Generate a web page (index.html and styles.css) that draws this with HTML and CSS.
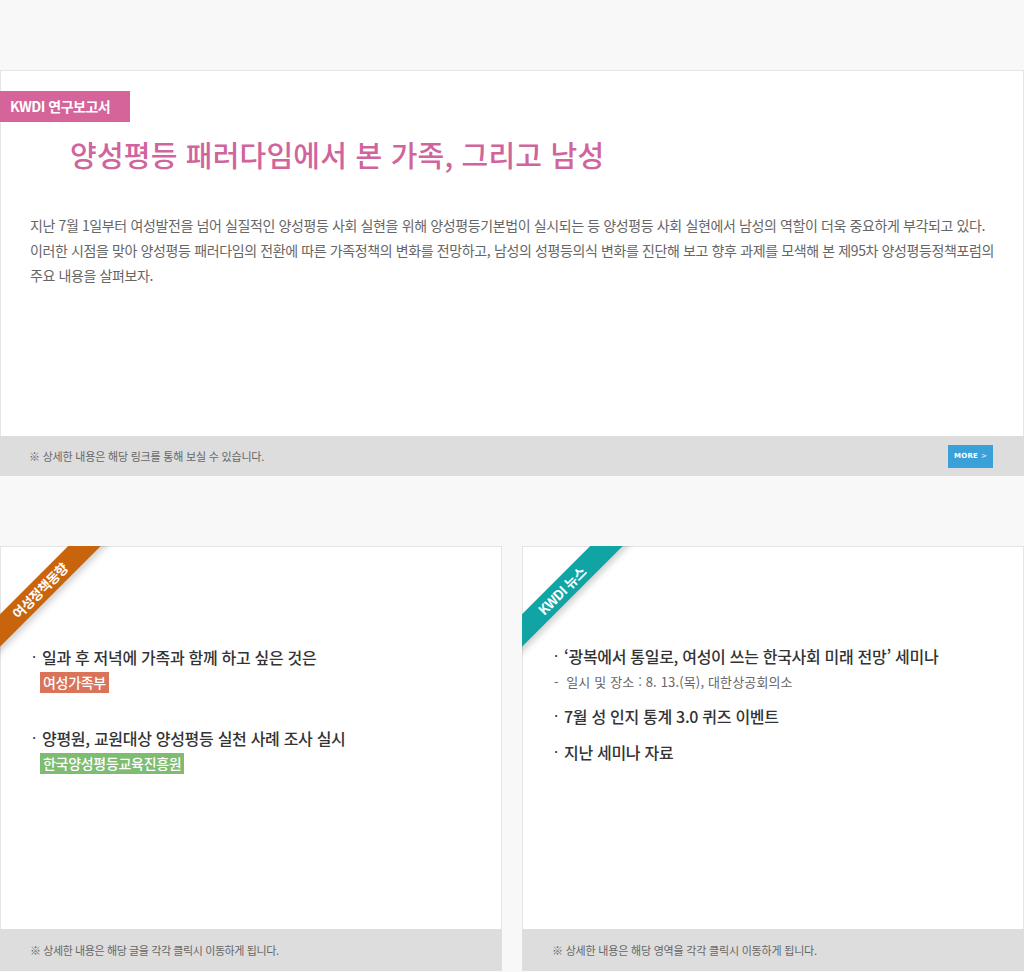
FILE: index.html
```html
<!DOCTYPE html>
<html lang="ko">
<head>
<meta charset="utf-8">
<title>KWDI</title>
<link rel="stylesheet" href="styles.css">
</head>
<body>
<div class="page">
  <div class="top-gap"></div>
  <section class="report">
    <div class="report-body">
      <div class="report-tag">KWDI 연구보고서</div>
      <h1 class="report-title">양성평등 패러다임에서 본 가족, 그리고 남성</h1>
      <p class="report-text">지난 7월 1일부터 여성발전을 넘어 실질적인 양성평등 사회 실현을 위해 양성평등기본법이 실시되는 등 양성평등 사회 실현에서 남성의 역할이 더욱 중요하게 부각되고 있다.<br>이러한 시점을 맞아 양성평등 패러다임의 전환에 따른 가족정책의 변화를 전망하고, 남성의 성평등의식 변화를 진단해 보고 향후 과제를 모색해 본 제95차 양성평등정책포럼의<br>주요 내용을 살펴보자.</p>
    </div>
    <div class="bar bar-report">
      <span class="bar-text">※ 상세한 내용은 해당 링크를 통해 보실 수 있습니다.</span>
      <a class="more-btn" href="#">MORE <span class="more-arrow">&gt;</span></a>
    </div>
  </section>
  <div class="mid-gap"></div>
  <div class="cards">
    <section class="card">
      <div class="card-body">
        <div class="ribbon-wrap"><div class="ribbon ribbon-orange">여성정책동향</div></div>
        <ul class="items items-left">
          <li class="item">
            <div class="item-title">일과 후 저녁에 가족과 함께 하고 싶은 것은</div>
            <span class="src src-red">여성가족부</span>
          </li>
          <li class="item">
            <div class="item-title">양평원, 교원대상 양성평등 실천 사례 조사 실시</div>
            <span class="src src-green">한국양성평등교육진흥원</span>
          </li>
        </ul>
      </div>
      <div class="bar bar-card"><span class="bar-text bar-text-tight">※ 상세한 내용은 해당 글을 각각 클릭시 이동하게 됩니다.</span></div>
    </section>
    <section class="card">
      <div class="card-body">
        <div class="ribbon-wrap"><div class="ribbon ribbon-teal">KWDI 뉴스</div></div>
        <ul class="items items-right">
          <li class="item news">
            <div class="item-title">‘광복에서 통일로, 여성이 쓰는 한국사회 미래 전망’ 세미나</div>
            <div class="item-sub">-&nbsp; 일시 및 장소 : 8. 13.(목), 대한상공회의소</div>
          </li>
          <li class="item news">
            <div class="item-title">7월 성 인지 통계 3.0 퀴즈 이벤트</div>
          </li>
          <li class="item news">
            <div class="item-title">지난 세미나 자료</div>
          </li>
        </ul>
      </div>
      <div class="bar bar-card"><span class="bar-text">※ 상세한 내용은 해당 영역을 각각 클릭시 이동하게 됩니다.</span></div>
    </section>
  </div>
</div>
</body>
</html>
```

FILE: styles.css
```css
* { box-sizing: border-box; }
html, body { margin: 0; padding: 0; }
body {
  background: #f8f8f8;
  font-family: "Noto Sans CJK KR", "Noto Sans", sans-serif;
  color: #333;
}
.page { width: 1024px; }
.top-gap { height: 70px; }
.report {
  background: #fff;
  border: 1px solid #e5e5e5;
  border-bottom: 0;
}
.report-body { height: 365px; padding-top: 20px; }
.report-tag {
  display: inline-block;
  background: #d4649a;
  color: #fff;
  font-size: 14px;
  font-weight: 700;
  height: 31px;
  line-height: 31px;
  padding: 0 20px 0 10px;
  margin-left: -1px;
  letter-spacing: -0.5px;
}
.report-title {
  margin: 12px 0 0 69px;
  font-size: 29px;
  font-weight: 500;
  color: #d0649c;
  line-height: 40px;
  letter-spacing: 0.2px;
}
.report-text {
  margin: 39px 0 0 29px;
  width: 990px;
  white-space: nowrap;
  font-size: 14px;
  line-height: 25px;
  color: #666;
  letter-spacing: -0.38px;
}
.bar {
  background: #dddddd;
  display: flex;
  align-items: center;
  justify-content: space-between;
}
.bar-report { height: 40px; padding: 0 31px 0 29px; margin: 0 -1px; }
.bar-text { font-size: 11px; color: #666; letter-spacing: -0.2px; }
.bar-text-tight { letter-spacing: -0.4px; }
.more-btn {
  display: block;
  background: #3aa0d8;
  color: #fff;
  text-decoration: none;
  font-family: "DejaVu Sans", sans-serif;
  font-size: 7px;
  font-weight: 700;
  width: 45px;
  height: 23px;
  line-height: 23px;
  text-align: center;
  letter-spacing: 0.3px;
}
.more-arrow { font-weight: 400; }
.mid-gap { height: 70px; }
.cards { display: flex; gap: 20px; }
.card { width: 502px; background: #fff; }
.card-body {
  position: relative;
  height: 383px;
  border: 1px solid #e5e5e5;
  border-bottom: 0;
}
.bar-card { height: 42px; padding-left: 30px; }
.ribbon-wrap {
  position: absolute;
  left: -1px;
  top: -1px;
  width: 115px;
  height: 115px;
  overflow: hidden;
}
.ribbon {
  position: absolute;
  left: -38px;
  top: 31px;
  width: 160px;
  height: 23px;
  line-height: 23px;
  text-align: center;
  transform: rotate(-45deg);
  color: #fff;
  font-size: 13.5px;
  font-weight: 700;
  letter-spacing: -0.5px;
  box-shadow: 0 4px 6px rgba(0,0,0,0.18);
  text-indent: -6px;
}
.ribbon-orange { background: #c8650c; }
.ribbon-teal { background: #11a4a4; }
.items { list-style: none; margin: 0; padding: 0; }
.items-left { padding: 98px 0 0 31px; }
.items-right { padding: 97px 0 0 31px; }
.item { position: relative; padding-left: 10px; }
.item::before {
  content: "·";
  position: absolute;
  left: 0;
  top: 0;
  font-size: 15px;
  line-height: 24px;
  color: #333;
}
.items-left .item + .item { margin-top: 33px; }
.item-title {
  font-size: 16px;
  font-weight: 500;
  line-height: 24px;
  color: #333;
  letter-spacing: -0.3px;
}
.src {
  display: inline-block;
  color: #fff;
  font-size: 14px;
  font-weight: 500;
  height: 21px;
  line-height: 21px;
  padding: 0 3px;
  margin-left: -2px;
  letter-spacing: -0.3px;
}
.src-red { background: #d9735a; }
.src-green { background: #7dbc71; }
.item-sub {
  font-size: 13px;
  color: #666;
  line-height: 20px;
  margin: 4px 0 0 -10px;
  letter-spacing: 0.15px;
}
.items-right .item + .item { margin-top: 12px; }
```
